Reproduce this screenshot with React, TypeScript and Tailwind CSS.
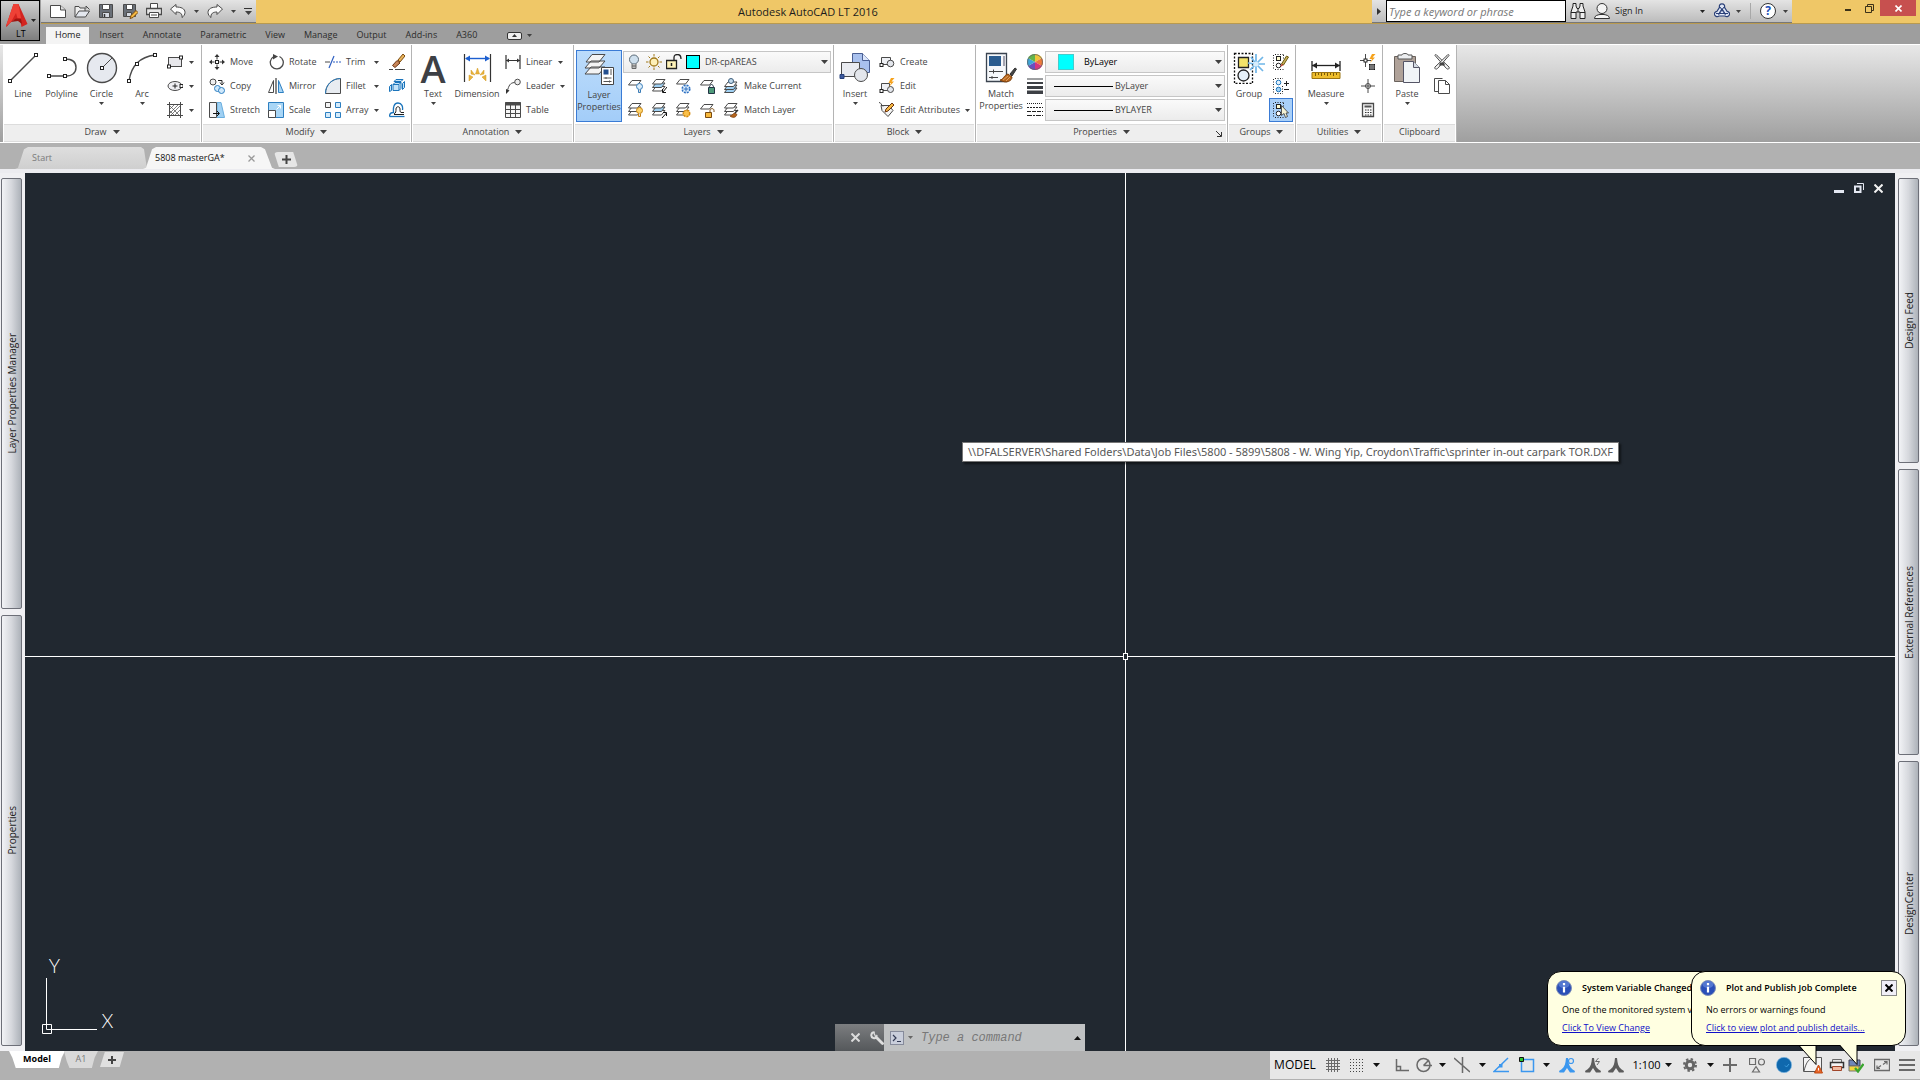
import React from 'react';
import { clsx } from 'clsx';

const INK = '#4a4a4a';

interface IconProps {
  size?: number;
  box?: string;
  children: React.ReactNode;
}

// every ribbon drawing goes through here: 16 unit box for small, 32 for large
const Icon: React.FC<IconProps> = ({ size = 16, box, children }) => (
  <svg
    width={size}
    height={size}
    viewBox={box || `0 0 ${size} ${size}`}
    fill="none"
    stroke={INK}
    strokeWidth="1"
    className="shrink-0"
    aria-hidden="true"
  >
    {children}
  </svg>
);

const Caret: React.FC<{ wide?: boolean; className?: string }> = ({ wide, className }) => (
  <svg
    width={wide ? 7 : 5}
    height={wide ? 4 : 3}
    viewBox="0 0 8 4"
    preserveAspectRatio="none"
    className={clsx('shrink-0', className || 'text-[#404040]')}
    aria-hidden="true"
  >
    <path d="M0 0h8L4 4z" fill="currentColor" />
  </svg>
);

/* ---------- small shared drawings ---------- */

const Sheet: React.FC<{ y: number; fill?: string; stroke?: string }> = ({ y, fill = '#fff', stroke = INK }) => (
  <path d={`M1.5 ${y + 4.5}L5 ${y}h9l-3.500 4.500z`} fill={fill} stroke={stroke} />
);

const Sheets: React.FC<{ accent?: string }> = ({ accent = '#fff' }) => (
  <>
    <Sheet y={8.5} />
    <Sheet y={5} fill={accent} />
    <Sheet y={1.5} />
  </>
);

const Bulb: React.FC<{ fill: string; stroke: string }> = ({ fill, stroke }) => (
  <g stroke={stroke}>
    <circle cx="12.5" cy="8.500" r="3" fill={fill} />
    <path d="M11.500 11.500v3h2v-3" fill="#ddd" />
  </g>
);

const NodeBox: React.FC<{ x: number; y: number }> = ({ x, y }) => (
  <rect x={x - 1.5} y={y - 1.5} width="3" height="3" fill="#fff" stroke="#222" />
);

const Brush = () => (
  <g strokeWidth="1">
    <path d="M25 22l5-6 1.500 1-4.500 7z" fill="#444" stroke="#333" />
    <path d="M15 28c3 0 4-5 8-6l4 3c0 4-6 7-12 3z" fill="#b5651d" stroke="#7a3e0c" />
    <path d="M18 28l5-4M21 29l4-4" stroke="#e0a060" />
  </g>
);

const Bolt = () => <path d="M12 0l-2.500 5h2.500l-2 4 5-5.500h-2.500L15.500 0z" fill="#f6a21b" stroke="none" />;

const GroupDots = () => (
  <>
    <path d="M.5 1v15M2 .5h9" stroke="#222" strokeDasharray="1 1.500" />
    <rect x="3.500" y="2.500" width="4" height="4" fill="#fffbd0" stroke="#222" />
    <circle cx="5.500" cy="11.500" r="2.300" fill="#fff" stroke="#222" />
    <path d="M2 15.500h9M10.500 1v5" stroke="#222" strokeDasharray="1 1.500" />
  </>
);

/* ---------- icon set ---------- */

const icons = {
  fileNew: (
    <Icon>
      <path d="M.5 2.500h10l5 4.500v7.500H.5z" fill="#fff" />
      <path d="M10.500 2.500V7h5" fill="#ddd" />
    </Icon>
  ),
  open: (
    <Icon>
      <path d="M1 14V3.500h4l1 1.500h5v3" fill="#eee" />
      <path d="M1 14l4-6h10.500l-4 6z" fill="#e3e7ee" />
      <path d="M12 5.500V3l3.500 3.500" />
    </Icon>
  ),
  save: (
    <Icon>
      <path d="M1.500 1.500h13v13h-13z" fill="#6a7078" />
      <path d="M4.500 1.500h7v5h-7z" fill="#fff" />
      <path d="M4.500 9.500h7v5h-7z" fill="#d5dae2" />
      <path d="M6.500 11v3" stroke="#333" strokeWidth="1.500" />
    </Icon>
  ),
  saveAs: (
    <Icon>
      <path d="M1.500 1.500h12v12h-12z" fill="#6a7078" />
      <path d="M4.500 1.500h6v5h-6z" fill="#fff" />
      <path d="M4.500 9.500h5v4h-5z" fill="#d5dae2" />
      <path d="M8 15.500l1-3 5-5 2 2-5 5z" fill="#f5b942" stroke="#7a4a10" />
    </Icon>
  ),
  print: (
    <Icon>
      <path d="M4.500 5V.5h7V5" fill="#fff" />
      <path d="M.5 5.500h15v6H.5z" fill="#e8e8e8" strokeWidth="1.300" />
      <path d="M3.500 9.500h9v5h-9z" fill="#fff" />
      <path d="M5 12h6" />
    </Icon>
  ),
  undo: (
    <Icon>
      <path d="M.5 6L6 1.500V4c5 0 9 1.500 9 5.500 0 2-1.500 4-3 5 .5-4-2-5.500-6-5.500v2.500z" fill="#fafafa" />
    </Icon>
  ),
  redo: (
    <Icon>
      <path d="M15.500 6L10 1.500V4C5 4 1 5.500 1 9.500c0 2 1.500 4 3 5-.5-4 2-5.500 6-5.500v2.500z" fill="#fafafa" />
    </Icon>
  ),
  line: (
    <Icon size={32}>
      <path d="M3 29L29 3" strokeWidth="1.400" />
      <NodeBox x={3} y={29} />
      <NodeBox x={29} y={3} />
    </Icon>
  ),
  polyline: (
    <Icon size={32}>
      <path d="M3 24h18c4 0 9-2.500 9-8.500S25 7 19 7" strokeWidth="1.400" />
      <NodeBox x={3} y={24} />
      <NodeBox x={19} y={24} />
      <NodeBox x={19} y={7} />
    </Icon>
  ),
  circle: (
    <Icon size={32}>
      <circle cx="16" cy="16" r="14.500" fill="#e6e9ef" strokeWidth="1.400" />
      <path d="M16 16L26 6" />
      <NodeBox x={16} y={16} />
    </Icon>
  ),
  arc: (
    <Icon size={32}>
      <path d="M3 29C5 15 13 5 29 3" strokeWidth="1.400" />
      <NodeBox x={3} y={29} />
      <NodeBox x={11} y={12} />
      <NodeBox x={29} y={3} />
    </Icon>
  ),
  rect: (
    <Icon>
      <rect x="1.500" y="3.500" width="13" height="9" fill="#e8e8ec" />
      <NodeBox x={2} y={12.5} />
      <NodeBox x={14} y={3.5} />
    </Icon>
  ),
  ellipse: (
    <Icon>
      <ellipse cx="8" cy="8" rx="7" ry="4.500" fill="#f0f0f4" />
      <path d="M8 5.500v5M5.500 8h5" stroke="#222" />
      <NodeBox x={14.5} y={8} />
    </Icon>
  ),
  hatch: (
    <Icon>
      <path d="M2.500 0v16M13.500 0v16M0 2.500h16M0 13.500h16" />
      <path d="M3 7l4-4M3 11l8-8M4 13l9-9M8 13l5-5M3 4l9 9M3 9l4 4" strokeWidth=".7" />
    </Icon>
  ),
  move: (
    <Icon>
      <path d="M8 0l2.500 3h-5zM8 16l2.500-3h-5zM0 8l3-2.500v5zM16 8l-3-2.500v5z" fill="#333" stroke="none" />
      <path d="M8 3v2.500M8 10.500V13M3 8h2.500M10.500 8H13" stroke="#333" />
      <NodeBox x={8} y={8} />
    </Icon>
  ),
  copy: (
    <Icon>
      <circle cx="4" cy="4" r="3" fill="#eee" />
      <circle cx="8.500" cy="10.500" r="3" fill="#cfe8fb" stroke="#2d7fc1" />
      <circle cx="12.500" cy="12.500" r="3" fill="#cfe8fb" stroke="#2d7fc1" />
      <path d="M9 2.500h4v3M11 4.500l2 2.500 2-2.500" stroke="#222" />
    </Icon>
  ),
  stretch: (
    <Icon>
      <path d="M8 .5h4l3.500 15H8z" fill="#9fd0f3" stroke="#6aaede" />
      <path d="M.5.5h7v15h-7z" fill="#f4f4f6" />
      <path d="M4 11.500h6M8 9l2.500 2.500L8 14" stroke="#111" />
    </Icon>
  ),
  rotate: (
    <Icon>
      <path d="M11.500 2.500a6.500 6.500 0 1 1-6 .3" strokeWidth="1.300" />
      <path d="M5 0l5 2.500L5 5.500z" fill="#444" stroke="none" />
    </Icon>
  ),
  mirror: (
    <Icon>
      <path d="M5.500 2.500v12h-5z" fill="#fff" />
      <path d="M8 0v16" strokeWidth="1.300" />
      <path d="M10.500 2.500v12h5z" fill="#a9d6f6" stroke="#2d7fc1" />
    </Icon>
  ),
  scale: (
    <Icon>
      <path d="M.5.5h15v15H.5z" fill="#a9d6f6" stroke="#2d7fc1" />
      <path d="M.5 8.500h7v7h-7z" fill="#fff" />
      <path d="M8.500 7.500l4-4M9.500 3.500h3v3" stroke="#fff" />
    </Icon>
  ),
  trim: (
    <Icon>
      <path d="M0 8h5" />
      <path d="M4 14l5-12" stroke="#2d5fc1" strokeWidth="1.200" />
      <path d="M8 8h8" stroke="#2d5fc1" strokeDasharray="2 1" />
    </Icon>
  ),
  fillet: (
    <Icon>
      <path d="M.5 15.500C.5 7 7 .5 15.500.5v15z" fill="#e8ecf1" />
      <path d="M.5 15.500C.5 7 7 .5 15.500.5" stroke="#2d7fc1" />
    </Icon>
  ),
  array: (
    <Icon>
      <path d="M.5.5h5v5h-5z" fill="#f4f4f4" />
      <path d="M10.500.5h5v5h-5zM.5 10.500h5v5h-5zM10.500 10.500h5v5h-5z" fill="#d4ebfb" stroke="#2d7fc1" />
    </Icon>
  ),
  erase: (
    <Icon>
      <path d="M9 6l5-6 2 2-5 6z" fill="#e8b45c" stroke="#7a4a10" />
      <path d="M3.500 11.500L8 6.500l3 2.500-5 4.500z" fill="#c9875a" stroke="#6b3413" />
      <path d="M0 15.500h4M6 15.500h10" stroke="#444" />
    </Icon>
  ),
  explode: (
    <Icon>
      <g fill="#c4e3f9" stroke="#1b74bb">
        <path d="M4 6.500h6v6H4zM4 6.500l2-2h6l-2 2M10 12.500l2-2v-6" />
        <path d="M.5 8.500l2-2v6l-2 1zM13.500 5.500l2-2v6l-2 2zM5 3.500l2-2h7l-2 2z" />
      </g>
    </Icon>
  ),
  offset: (
    <Icon>
      <path d="M.5 14.500c0-3 1-4 4-4C4 5 5 1 9 1s5 4 4.500 7" stroke="#1b74bb" strokeWidth="1.300" />
      <path d="M.5 14.500h15" stroke="#1b74bb" strokeWidth="1.300" />
      <path d="M5 12c2-1 2-3 2-5 0-3 4-3 4 0 0 2 0 3 1 3.500h3M5 12.500h10" stroke="#222" />
    </Icon>
  ),
  text: (
    <span className="h-8 w-8 text-center font-['Open_Sans',sans-serif] text-[38px] leading-[32px] font-semibold text-[#3d4045]">
      A
    </span>
  ),
  dimension: (
    <Icon size={32}>
      <path d="M3.500 2v28M29.500 2v28" stroke="#333" strokeWidth="1.200" />
      <path d="M5 6.500h23" stroke="#1d5fd0" strokeWidth="1.400" />
      <path d="M4 6.500l5-3v6zM29 6.500l-5-3v6z" fill="#1d5fd0" stroke="none" />
      <g fill="#e9b33e" stroke="#d39a22" strokeWidth=".5">
        <path d="M16.500 16l2 6h-4zM10 18l4 5-4-1zM23 18l-4 5 4-1zM8 23l4 2-4 4zM25 23l-4 2 4 4z" />
      </g>
    </Icon>
  ),
  linear: (
    <Icon>
      <path d="M1 1v14M15 1v14M1 6.500h14" stroke="#333" strokeWidth="1.200" />
      <path d="M1 6.500l3-2v4zM15 6.500l-3-2v4z" fill="#333" stroke="none" />
    </Icon>
  ),
  leader: (
    <Icon>
      <circle cx="12.500" cy="4" r="2.800" fill="#eee" />
      <path d="M9.500 4.500C5 5 4 7 2 14" />
      <path d="M1 16l0-5 3.500 1.500z" fill="#333" stroke="none" />
    </Icon>
  ),
  table: (
    <Icon>
      <path d="M.5.500h15v15H.500z" fill="#f6f6f6" />
      <path d="M0 .5h16v3H0z" fill="#4a4a4a" stroke="none" />
      <path d="M.5 7.500h15M.5 11.500h15M5.500 3v13M10.500 3v13" />
    </Icon>
  ),
  layerProps: (
    <Icon size={32}>
      <path d="M2 21l6-7h14l-6 7zM2 15l6-7h14l-6 7zM3 9l6-7.500h13L16 9z" fill="#f4f4f4" />
      <path d="M18.500 14.500h12v17h-12z" fill="#fff" stroke="#444" />
      <path d="M20.500 16.500h5v5h-5z" fill="#234f8f" stroke="none" />
      <path d="M28 16v6M20.500 25h8M20.500 28.500h8M23 24v2M26.500 27.500v2" stroke="#555" />
    </Icon>
  ),
  bulb: (
    <Icon>
      <circle cx="8" cy="5.500" r="4.500" fill="#cfe0ee" stroke="#5b6b78" />
      <path d="M6 10v4.500h4V10" fill="#bbb" stroke="#666" />
      <path d="M6 12h4" stroke="#666" />
    </Icon>
  ),
  sun: (
    <Icon>
      <circle cx="8" cy="8" r="4" fill="#fdf0b8" stroke="#a07818" strokeWidth="1.300" />
      <path d="M8 0v2.500M8 13.500V16M0 8h2.500M13.500 8H16M2.500 2.500L4 4M12 12l1.500 1.500M2.500 13.500L4 12M12 4l1.500-1.500" stroke="#a07818" />
    </Icon>
  ),
  unlock: (
    <Icon>
      <path d="M.5 6.500h10v8H.5z" fill="#fff3b8" stroke="#222" strokeWidth="1.300" />
      <path d="M8 6V3.500C8 1 10 .5 11.500.5S15 1.500 15 5" stroke="#222" strokeWidth="1.300" />
      <path d="M5.500 9v3" stroke="#222" strokeWidth="1.500" />
    </Icon>
  ),
  layOff: (
    <Icon>
      <Sheet y={2.5} />
      <Bulb fill="#dceefb" stroke="#3a7db8" />
    </Icon>
  ),
  layIso: (
    <Icon>
      <Sheets accent="#9fd0f3" />
      <path d="M16 9l-4 5M11.500 11v3.500H15" stroke="#111" />
    </Icon>
  ),
  layFreeze: (
    <Icon>
      <Sheet y={1.5} />
      <circle cx="11" cy="11" r="3.800" fill="#e3f2fd" stroke="#2d6fc1" strokeWidth="1.500" strokeDasharray="2 1" />
      <path d="M11 8.500v5M8.500 11h5" stroke="#2d6fc1" />
    </Icon>
  ),
  layLock: (
    <Icon>
      <Sheet y={2.5} />
      <path d="M9.500 9.500h6v6h-6z" fill="#4f9a7a" stroke="#234" />
      <path d="M10.500 9.500c0-4 4-4 4 0" stroke="#234" />
    </Icon>
  ),
  makeCurrent: (
    <Icon>
      <Sheet y={10} fill="#9fd0f3" />
      <Sheet y={7} fill="#9fd0f3" />
      <Sheet y={4} />
      <circle cx="8" cy="3" r="2.500" fill="#c4dcee" stroke="#3b5c7a" />
    </Icon>
  ),
  layOn: (
    <Icon>
      <Sheets />
      <Bulb fill="#fdd36a" stroke="#c78212" />
    </Icon>
  ),
  layUniso: (
    <Icon>
      <Sheets accent="#9fd0f3" />
      <path d="M11 16l4.500-5M12 10.500h3.500V14" stroke="#111" />
    </Icon>
  ),
  layThaw: (
    <Icon>
      <Sheets />
      <circle cx="11.500" cy="11.500" r="3.200" fill="#fbc14a" stroke="#d48a10" strokeWidth="1.500" strokeDasharray="2 1" />
    </Icon>
  ),
  layUnlock: (
    <Icon>
      <Sheet y={2.5} />
      <path d="M6.500 10.500h6v5h-6z" fill="#f8b93c" stroke="#7a4a10" />
      <path d="M11 10V8.500c0-2.500 4-2.500 4 0V10" stroke="#7a4a10" />
    </Icon>
  ),
  matchLayer: (
    <Icon>
      <Sheets />
      <path d="M7 14c2 0 3-3 5-3l2 1.500c-1 3-4 4-7 1.500z" fill="#b5651d" stroke="#7a3e0c" strokeWidth=".7" />
      <path d="M12 11l3-3" stroke="#333" strokeWidth="1.500" />
    </Icon>
  ),
  insert: (
    <Icon size={32}>
      <path d="M13.500 1.500h10l7 7v12h-17z" fill="#a9c1ee" stroke="#4a5f93" />
      <path d="M23.500 1.500v7h7" fill="#dde7fb" stroke="#4a5f93" />
      <path d="M2.500 10.500h18v14h-18z" fill="#e9ebf0" />
      <circle cx="22" cy="23" r="6.500" fill="#e3e6ec" />
      <path d="M1 22.500h4v4H1z" fill="#3d5a9e" stroke="#26407c" />
    </Icon>
  ),
  create: (
    <Icon>
      <path d="M2.500 3.500h9v7h-9z" fill="#eef0f4" />
      <circle cx="11.500" cy="9.500" r="3.300" fill="#e3e6ec" />
      <NodeBox x={2.5} y={11} />
    </Icon>
  ),
  edit: (
    <Icon>
      <path d="M2.500 5.500h8v7h-8z" fill="#eef0f4" />
      <circle cx="11.500" cy="11.500" r="3" fill="#e3e6ec" />
      <NodeBox x={2.5} y={13} />
      <Bolt />
    </Icon>
  ),
  editAttr: (
    <Icon>
      <path d="M2 3.500h8l4 5-5 6-6-6z" fill="#f4f4f4" />
      <path d="M0 .5c2 0 2 2 4 4" />
      <path d="M6 10l1-3 6-6 2 2-6 6z" fill="#f5b942" stroke="#6b3413" />
    </Icon>
  ),
  matchProps: (
    <Icon size={32}>
      <path d="M1.500 1.500h20v28h-20z" fill="#f6f8fb" stroke="#3b4450" strokeWidth="1.300" />
      <path d="M4 4h12v10H4z" fill="#2b5c8f" stroke="none" />
      <path d="M19 4v10" stroke="#889" strokeWidth="1.500" />
      <path d="M4 19.500h14M4 25.500h9M8.500 17.500v4M7 24v3" stroke="#444" />
      <Brush />
    </Icon>
  ),
  colorWheel: (
    <Icon>
      <g stroke="none">
        <path d="M8 8L8 0A8 8 0 0 1 15 4z" fill="#f0c43c" />
        <path d="M8 8L15 4A8 8 0 0 1 15 12z" fill="#ef7b3a" />
        <path d="M8 8L15 12A8 8 0 0 1 8 16z" fill="#d8367c" />
        <path d="M8 8L8 16A8 8 0 0 1 1 12z" fill="#6a4fc0" />
        <path d="M8 8L1 12A8 8 0 0 1 1 4z" fill="#3fa6d8" />
        <path d="M8 8L1 4A8 8 0 0 1 8 0z" fill="#63b54a" />
      </g>
      <circle cx="8" cy="8" r="7.500" stroke="#666" strokeWidth=".8" />
    </Icon>
  ),
  lineweight: (
    <Icon>
      <path d="M0 1h16" stroke="#3d4045" />
      <path d="M0 5h16" stroke="#3d4045" strokeWidth="2" />
      <path d="M0 9.500h16" stroke="#3d4045" strokeWidth="3" />
      <path d="M0 14.500h16" stroke="#3d4045" strokeWidth="4" />
    </Icon>
  ),
  linetype: (
    <Icon>
      <path d="M0 1.500h16" stroke="#222" strokeDasharray="1 1" />
      <path d="M0 5.500h16" stroke="#222" strokeDasharray="2 1" />
      <path d="M0 9.500h16" stroke="#222" strokeDasharray="4 1" />
      <path d="M0 13.500h16" stroke="#222" strokeDasharray="5 1 2 1" />
    </Icon>
  ),
  group: (
    <Icon size={32}>
      <path d="M1.500 1.500h18v30h-18z" stroke="#111" strokeDasharray="2 1.500" strokeWidth="1.300" />
      <path d="M5.500 5.500h10v10h-10z" fill="#f3e36a" stroke="#222" strokeWidth="1.300" />
      <circle cx="10.500" cy="23.500" r="5.500" fill="#e6f0f8" stroke="#222" strokeWidth="1.300" />
      <path d="M23 12V2M23 12l7-7M23 12h9M23 12l7 7M23 12v9M23 12l-6 6M23 12l-8-1M23 12l-5-7" stroke="#6fb6e8" strokeWidth="1.700" />
      <circle cx="23" cy="12" r="2.500" fill="#d8eefc" stroke="none" />
    </Icon>
  ),
  ungroup: (
    <Icon>
      <GroupDots />
      <path d="M8.500 10l5-8 2 1-5 8z" fill="#c9b35a" stroke="#6b5a13" />
      <path d="M7.500 13l1-3 2 1z" fill="#c0392b" stroke="none" />
    </Icon>
  ),
  groupEdit: (
    <Icon>
      <g stroke="#1b74bb">
        <path d="M.5 1v15" stroke="#222" strokeDasharray="1 1.500" />
        <circle cx="5.500" cy="4.500" r="2.300" fill="#e3f2fd" />
        <circle cx="5.500" cy="11.500" r="2.300" fill="#9fd0f3" />
      </g>
      <path d="M2 .5h8M2 15.500h8M9.500 8v7" stroke="#222" strokeDasharray="1 1.500" />
      <path d="M11 5.500h5M13.500 3v5M11 11.500h5" stroke="#222" />
    </Icon>
  ),
  groupSelect: (
    <Icon>
      <GroupDots />
      <path d="M8.500 3.500v10l2.500-2 1.500 4 2-1-1.500-3.500h2.500z" fill="#f4f3d5" stroke="#333" strokeWidth=".8" />
    </Icon>
  ),
  measure: (
    <Icon size={32}>
      <path d="M2 9v10M30 9v10" stroke="#222" strokeWidth="1.300" />
      <path d="M2 13.500h28" stroke="#222" strokeWidth="1.300" />
      <path d="M2 13.500l5-3v6zM30 13.500l-5-3v6z" fill="#222" stroke="none" />
      <path d="M2 20.500h28v6H2z" fill="#eebd2c" stroke="#9c7410" />
      <path d="M5.500 21v3M8.500 21v2M11.500 21v3M14.500 21v2M17.500 21v3M20.500 21v2M23.500 21v3M26.500 21v2" stroke="#7a5a08" />
    </Icon>
  ),
  quickSelect: (
    <Icon>
      <path d="M5.500 0v13M0 6.500h11" />
      <NodeBox x={5.5} y={6.5} />
      <Bolt />
      <path d="M9 10h6v6H9z" fill="#111" stroke="none" />
      <path d="M11 10v6M13 10v6M9 12h6M9 14h6" stroke="#fff" strokeWidth=".5" />
    </Icon>
  ),
  pointId: (
    <Icon>
      <path d="M8 1v14M1 8h14" />
      <circle cx="8" cy="8" r="2.500" />
    </Icon>
  ),
  calc: (
    <Icon>
      <path d="M2.500 1.500h11v13h-11z" fill="#f8f8f8" strokeWidth="1.300" />
      <path d="M4.500 3.500h7v2h-7z" fill="#555" stroke="none" />
      <path d="M5 8h7M5 10.500h7M5 13h7" stroke="#333" strokeDasharray="1.500 1" />
    </Icon>
  ),
  paste: (
    <Icon size={32}>
      <path d="M3.500 4.500h21v25h-21z" fill="#b0a299" stroke="#6a625c" />
      <path d="M7 3h4c0-2 6-2 6 0h4v4H7z" fill="#eceef0" stroke="#555" />
      <path d="M12.500 9.500h10l6 6v15h-16z" fill="#f1f4f7" stroke="#556" />
      <path d="M22.500 9.500v6h6" fill="#d5dbe2" stroke="#556" />
    </Icon>
  ),
  // open blades crossing at the pivot, handles as crossed outlines
  cut: (
    <Icon>
      <path d="M1 1.500c0-1.500 1.500-1 2 0L15 13c1 1.500-1 3-2.500 1.500L8 9.500z" fill="#f4f4f4" />
      <path d="M15 1.500c0-1.500-1.500-1-2 0L1 13c-1 1.500 1 3 2.500 1.500L8 9.500z" fill="#f4f4f4" />
      <path d="M6 8.500h4l1 3H5z" fill="#444" stroke="none" />
    </Icon>
  ),
  copyClip: (
    <Icon>
      <path d="M4 13.500H.5v-13h8" />
      <path d="M4.500 2.500h7l4 4v9h-11z" fill="#fff" />
      <path d="M11.500 2.500v4h4" />
    </Icon>
  ),
  binoculars: (
    <Icon>
      <path d="M1 15.500V9l2-6V.5h3V3l1 2.500h2L10 3V.5h3V3l2 6v6.500h-5V9H6v6.500z" fill="#eee" stroke="#222" />
      <path d="M1 9.500h5M10 9.500h5M8 5v4" stroke="#222" />
    </Icon>
  ),
  user: (
    <Icon>
      <path d="M.5 15.500c0-3 3-3.500 5.500-4h4c2.500.5 5.500 1 5.500 4z" fill="#f4f4f4" stroke="#333" />
      <circle cx="8" cy="5.500" r="5" fill="#f4f4f4" stroke="#333" />
    </Icon>
  ),
  exchange: (
    <Icon>
      <path
        d="M8 .8c2 0 3 1.500 2.500 3.500l2.500 4c2 .3 3 2 2.300 3.700-.8 1.800-2.800 2.200-4.300 1H5c-1.500 1.200-3.500.8-4.300-1C0 10.300 1 8.600 3 8.300l2.500-4C5 2.300 6 .8 8 .8z"
        fill="#dfe6f5"
        stroke="#2a4078"
        strokeWidth="1.200"
      />
      <path d="M8 5.500l3 5H5zM6 4l5.500 8M10 4L4.500 12M2 10.500h12" stroke="#2a4078" />
    </Icon>
  ),
  help: (
    <span className="flex h-4 w-4 items-center justify-center rounded-full border border-[#333] bg-white text-[12px] leading-none font-bold text-[#1d4fb8]">
      ?
    </span>
  ),
};

/* ---------- ribbon building blocks ---------- */

interface ToolProps {
  icon: React.ReactNode;
  label?: string;
  title?: string;
  caret?: boolean;
  className?: string;
}

const Tool: React.FC<ToolProps> = ({ icon, label, title, caret, className }) => (
  <button type="button" aria-label={title || label} className={clsx('flex h-6 items-center gap-[5px] text-left', className)}>
    {icon}
    {label && <span className="whitespace-nowrap">{label}</span>}
    {caret && <Caret className="ml-auto text-[#404040]" />}
  </button>
);

const BigTool: React.FC<ToolProps> = ({ icon, label, caret, className }) => (
  <button type="button" className={clsx('flex h-[72px] shrink-0 flex-col items-center pt-[2px] leading-3', className)}>
    {icon}
    <span className="mt-1 w-min whitespace-pre-wrap">{label}</span>
    {caret && <Caret className="mt-[2px] text-[#404040]" />}
  </button>
);

interface PanelProps {
  title: string;
  caret?: boolean;
  corner?: boolean;
  className: string;
  children: React.ReactNode;
}

const Panel: React.FC<PanelProps> = ({ title, caret = true, corner, className, children }) => (
  <section className={clsx('flex shrink-0 flex-col border-r border-[#b4b4b4] bg-white', className)}>
    <div className="flex flex-1 items-start pt-[5px]">{children}</div>
    <button
      type="button"
      className="relative mx-px flex h-[18px] items-center justify-center gap-[6px] border-y border-[#dcdcdc] bg-[#eeeeee] pb-[2px]"
    >
      {title}
      {caret && <Caret wide />}
      {corner && (
        <svg width="6" height="6" viewBox="0 0 6 6" className="absolute right-1 bottom-1" aria-hidden="true">
          <path d="M0 0l5 5M5.500 1v4.500H1" stroke="#333" fill="none" />
        </svg>
      )}
    </button>
  </section>
);

interface ComboProps {
  label: string;
  value: string;
  lead: React.ReactNode;
  className?: string;
}

const Combo: React.FC<ComboProps> = ({ label, value, lead, className }) => (
  <div
    className={clsx(
      'flex h-[22px] items-center border border-[#c6c6c6] bg-linear-to-b from-[#fafafa] to-[#ececec] pr-[2px]',
      className
    )}
  >
    {lead}
    <select aria-label={label} className="min-w-0 flex-1 appearance-none bg-transparent outline-none">
      <option>{value}</option>
    </select>
    <Caret wide />
  </div>
);

const LineSample = () => <span className="mr-[2px] ml-2 h-px w-[59px] bg-black" />;

const RIBBON_TABS = ['Home', 'Insert', 'Annotate', 'Parametric', 'View', 'Manage', 'Output', 'Add-ins', 'A360'];

const TitleBar = () => (
  <div className="flex h-6 border-b border-[#b99a4f] bg-[#efc767]">
    <div className="flex w-[215px] items-center border-b border-[#777] bg-linear-to-b from-[#e4e4e4] to-[#bcbcbc] pl-[9px]">
      <div className="flex gap-2">
        <button type="button" aria-label="New">{icons.fileNew}</button>
        <button type="button" aria-label="Open">{icons.open}</button>
        <button type="button" aria-label="Save">{icons.save}</button>
        <button type="button" aria-label="Save As">{icons.saveAs}</button>
        <button type="button" aria-label="Plot">{icons.print}</button>
        <button type="button" aria-label="Undo" className="flex items-center gap-2">{icons.undo}<Caret /></button>
        <button type="button" aria-label="Redo" className="flex items-center gap-2">{icons.redo}<Caret /></button>
        <button type="button" aria-label="Customize" className="flex flex-col items-center justify-center gap-[2px]">
          <span className="h-px w-2 bg-[#333]" />
          <Caret wide />
        </button>
      </div>
    </div>
    <h1 className="flex-1 self-center pr-3 text-center text-[11px] text-[#1c1c1c]">Autodesk AutoCAD LT 2016</h1>
    <div className="flex w-[420px] items-center border-b border-[#777] bg-linear-to-b from-[#e4e4e4] to-[#bcbcbc]">
      <button type="button" aria-label="Collapse search" className="flex w-[14px] justify-center">
        <svg width="4" height="7" viewBox="0 0 4 7" aria-hidden="true"><path d="M0 0l4 3.500L0 7z" fill="#333" /></svg>
      </button>
      <input
        type="text"
        aria-label="Search"
        placeholder="Type a keyword or phrase"
        className="h-[22px] w-[180px] border border-black bg-white px-[2px] text-[11px] italic placeholder:text-[#777]"
      />
      <button type="button" aria-label="Search" className="ml-1">{icons.binoculars}</button>
      <button type="button" className="ml-2 flex w-[111px] items-center gap-[5px]">
        {icons.user}
        Sign In
        <Caret className="ml-auto" />
      </button>
      <button type="button" aria-label="Autodesk Exchange" className="ml-[9px] flex items-center gap-[6px]">{icons.exchange}<Caret /></button>
      <span className="ml-[9px] h-4 w-px bg-[#a8a8a8]" />
      <button type="button" aria-label="Help" className="ml-[9px] flex items-center gap-[7px]">{icons.help}<Caret /></button>
    </div>
    <div className="flex w-32 items-start justify-end pr-1">
      <button type="button" aria-label="Minimize" className="flex h-4 w-5 items-center justify-center">
        <span className="mt-1 h-[2px] w-[6px] bg-[#3b3118]" />
      </button>
      <button type="button" aria-label="Restore" className="flex h-4 w-[22px] items-center justify-center">
        <svg width="9" height="9" viewBox="0 0 9 9" fill="none" stroke="#3b3118" aria-hidden="true">
          <path d="M2.500 2V.5h6v6H7M.5 2.500h6v6h-6z" />
        </svg>
      </button>
      <button type="button" aria-label="Close" className="flex h-4 w-9 items-center justify-center bg-[#c7504f]">
        <svg width="7" height="7" viewBox="0 0 7 7" stroke="#fff" strokeWidth="1.600" aria-hidden="true">
          <path d="M.5.5l6 6M6.500.5l-6 6" />
        </svg>
      </button>
    </div>
  </div>
);

const Header = () => (
  <header className="flex bg-[#9e9e9e]">
    <button
      type="button"
      aria-label="Application menu"
      className="relative mr-px h-[41px] w-10 border border-black bg-linear-to-b from-[#cfcfcf] to-[#7e7e7e]"
    >
      <svg width="24" height="26" viewBox="0 0 24 26" className="absolute top-[2px] left-1" aria-hidden="true">
        <path d="M8.500 1h5l9 20-6 3-1-5-3-2H9l-4 3-3.500 4L1 23z" fill="#d3241f" />
        <path d="M8.500 1L1 23l5-4 5-9 1.500 5H16L13.500 1z" fill="#ee4136" />
        <path d="M6 19l5-3.500 5 .5 1 5-4-3z" fill="#9c1511" />
      </svg>
      <Caret className="absolute top-[18px] right-[3px] text-[#222]" />
      <span className="absolute bottom-0 left-[15px] text-black">LT</span>
    </button>
    <div className="min-w-0 flex-1">
      <TitleBar />
      <nav className="flex h-5 items-end gap-px pl-[5px]">
        {RIBBON_TABS.map((tab, i) => (
          <button
            key={tab}
            type="button"
            className={clsx('h-[17px] px-[9px] pb-[2px]', i === 0 ? 'bg-[#f4f4f4] text-[#222]' : 'text-[#2c2c2c]')}
          >
            {tab}
          </button>
        ))}
        <button type="button" aria-label="Minimize ribbon" className="ml-5 flex h-[17px] items-center gap-[5px]">
          <span className="flex h-2 w-[15px] items-center justify-center rounded-[2px] border border-[#333] bg-[#eee]">
            <Caret className="rotate-180 text-[#333]" />
          </span>
          <Caret />
        </button>
      </nav>
    </div>
  </header>
);

const Ribbon = () => (
  <div className="flex h-[99px] border-y border-white bg-linear-to-b from-[#e8e8e8] to-[#9f9f9f] pl-[3px] text-[#444]">
    <Panel title="Draw" className="w-[199px]">
      <BigTool icon={icons.line} label="Line" className="ml-px w-[38px]" />
      <BigTool icon={icons.polyline} label="Polyline" className="w-[39px]" />
      <BigTool icon={icons.circle} label="Circle" caret className="w-[41px]" />
      <BigTool icon={icons.arc} label="Arc" caret className="w-10" />
      <div className="ml-[5px] w-[27px]">
        <Tool icon={icons.rect} title="Rectangle" caret className="w-full" />
        <Tool icon={icons.ellipse} title="Ellipse" caret className="w-full" />
        <Tool icon={icons.hatch} title="Hatch" caret className="w-full" />
      </div>
    </Panel>

    <Panel title="Modify" className="w-[210px]">
      <div className="ml-[7px] w-[59px]">
        <Tool icon={icons.move} label="Move" />
        <Tool icon={icons.copy} label="Copy" />
        <Tool icon={icons.stretch} label="Stretch" />
      </div>
      <div className="w-[57px]">
        <Tool icon={icons.rotate} label="Rotate" />
        <Tool icon={icons.mirror} label="Mirror" />
        <Tool icon={icons.scale} label="Scale" />
      </div>
      <div className="w-[54px]">
        <Tool icon={icons.trim} label="Trim" caret className="w-full" />
        <Tool icon={icons.fillet} label="Fillet" caret className="w-full" />
        <Tool icon={icons.array} label="Array" caret className="w-full" />
      </div>
      <div className="ml-[10px]">
        <Tool icon={icons.erase} title="Erase" />
        <Tool icon={icons.explode} title="Explode" />
        <Tool icon={icons.offset} title="Offset" />
      </div>
    </Panel>

    <Panel title="Annotation" className="w-[162px]">
      <BigTool icon={icons.text} label="Text" caret className="ml-[3px] w-9" />
      <BigTool icon={icons.dimension} label="Dimension" className="w-[52px]" />
      <div className="ml-[2px] w-[60px]">
        <Tool icon={icons.linear} label="Linear" caret className="w-[58px]" />
        <Tool icon={icons.leader} label="Leader" caret className="w-full" />
        <Tool icon={icons.table} label="Table" />
      </div>
    </Panel>

    <Panel title="Layers" className="w-[260px]">
      <BigTool
        icon={icons.layerProps}
        label="Layer Properties"
        className="ml-[2px] w-[46px] border border-[#3a7bd5] bg-linear-to-b from-[#bcdcfb] to-[#a3cdf8]"
      />
      <div>
        <div className="flex h-6 items-center">
          <Combo
            label="Layer"
            value="DR-cpAREAS"
            className="ml-px w-[208px]"
            lead={
              <div className="mr-[5px] ml-[2px] flex items-center gap-[4px]">
                {icons.bulb}
                {icons.sun}
                {icons.unlock}
                <span className="h-[14px] w-[14px] border border-black bg-[#00ffff]" />
              </div>
            }
          />
        </div>
        <div className="ml-[5px] flex gap-2">
          <Tool icon={icons.layOff} title="Off" />
          <Tool icon={icons.layIso} title="Isolate" />
          <Tool icon={icons.layFreeze} title="Freeze" />
          <Tool icon={icons.layLock} title="Lock" />
          <Tool icon={icons.makeCurrent} label="Make Current" />
        </div>
        <div className="ml-[5px] flex gap-2">
          <Tool icon={icons.layOn} title="Turn All Layers On" />
          <Tool icon={icons.layUniso} title="Unisolate" />
          <Tool icon={icons.layThaw} title="Thaw All Layers" />
          <Tool icon={icons.layUnlock} title="Unlock" />
          <Tool icon={icons.matchLayer} label="Match Layer" />
        </div>
      </div>
    </Panel>

    <Panel title="Block" className="w-[142px]">
      <BigTool icon={icons.insert} label="Insert" caret className="ml-[3px] w-9" />
      <div className="ml-[6px] w-[89px]">
        <Tool icon={icons.create} label="Create" />
        <Tool icon={icons.edit} label="Edit" />
        <Tool icon={icons.editAttr} label="Edit Attributes" caret className="w-full" />
      </div>
    </Panel>

    <Panel title="Properties" corner className="w-[252px]">
      <BigTool icon={icons.matchProps} label="Match Properties" className="ml-[3px] w-11" />
      <div className="ml-1">
        <Tool icon={icons.colorWheel} title="Object Color" />
        <Tool icon={icons.lineweight} title="Lineweight" />
        <Tool icon={icons.linetype} title="Linetype" />
      </div>
      <div className="ml-[2px] flex w-[180px] flex-col gap-[2px] pt-px">
        <Combo
          label="Object color"
          value="ByLayer"
          lead={<span className="mr-[10px] ml-3 h-4 w-4 border border-[#4cc] bg-[#00ffff]" />}
          className="text-black"
        />
        <Combo label="Object lineweight" value="ByLayer" lead={<LineSample />} />
        <Combo label="Object linetype" value="BYLAYER" lead={<LineSample />} />
      </div>
    </Panel>

    <Panel title="Groups" className="w-[68px]">
      <BigTool icon={icons.group} label="Group" className="ml-px w-10" />
      <div className="w-6">
        <Tool icon={icons.ungroup} title="Ungroup" className="w-full justify-center" />
        <Tool icon={icons.groupEdit} title="Group Edit" className="w-full justify-center" />
        <Tool icon={icons.groupSelect} title="Group Selection On/Off" className="w-full justify-center border border-[#3a7bd5] bg-[#a9d0f8]" />
      </div>
    </Panel>

    <Panel title="Utilities" className="w-[87px]">
      <BigTool icon={icons.measure} label="Measure" caret className="ml-2 w-11" />
      <div className="ml-3">
        <Tool icon={icons.quickSelect} title="Quick Select" />
        <Tool icon={icons.pointId} title="ID Point" />
        <Tool icon={icons.calc} title="Quick Calculator" />
      </div>
    </Panel>

    <Panel title="Clipboard" caret={false} className="w-[74px]">
      <BigTool icon={icons.paste} label="Paste" caret className="ml-1 w-10" />
      <div className="ml-[7px]">
        <Tool icon={icons.cut} title="Cut" />
        <Tool icon={icons.copyClip} title="Copy Clip" />
      </div>
    </Panel>
  </div>
);

const FileTabs = () => (
  <div className="flex h-[26px] items-end bg-[#b1b1b1] pl-[15px]">
    <button
      type="button"
      className="h-[22px] w-[132px] bg-linear-to-b from-[#dedede] to-[#cfcfcf] pl-[17px] text-left text-[#7a7a7a] [clip-path:polygon(0_100%,3px_94%,9px_10%,13px_0,126px_0,129px_10%,100%_100%)]"
    >
      Start
    </button>
    <div className="-ml-1 flex h-[22px] w-[132px] items-center bg-[#f6f6f6] pr-[20px] pl-3 text-[#111] [clip-path:polygon(0_100%,3px_94%,9px_10%,13px_0,118px_0,122px_10%,129px_94%,100%_100%)]">
      <button type="button" className="flex-1 text-left">5808 masterGA*</button>
      <button type="button" aria-label="Close drawing">
        <svg width="7" height="7" viewBox="0 0 7 7" stroke="#999" strokeWidth="1.300" aria-hidden="true">
          <path d="M.5.5l6 6M6.500.5l-6 6" />
        </svg>
      </button>
    </div>
    <button
      type="button"
      aria-label="New drawing"
      className="mb-[2px] -ml-px flex h-[15px] w-6 items-center justify-center rounded-tl-sm rounded-br-sm bg-[#e6e6e6] [clip-path:polygon(0_0,80%_0,100%_100%,20%_100%)]"
    >
      <svg width="9" height="9" viewBox="0 0 9 9" stroke="#444" strokeWidth="2" aria-hidden="true"><path d="M4.500 0v9M0 4.500h9" /></svg>
    </button>
  </div>
);

const PaletteStrip: React.FC<{ names: string[]; side: 'left' | 'right' }> = ({ names, side }) => (
  <aside className={clsx('flex w-[25px] shrink-0 flex-col gap-[6px] bg-[#f0f0f3] pt-[5px] pb-[5px]', side === 'left' ? 'pr-[3px] pl-px' : 'pr-px pl-[3px]')}>
    {names.map((name) => (
      <button
        key={name}
        type="button"
        className="relative flex flex-1 items-center justify-center rounded-[2px] border border-[#6d6f78] bg-linear-to-r from-[#f2f3f6] via-[#d6d8dd] to-[#adb2b9] text-[10px] text-[#222]"
      >
        <span className="absolute top-[2px] h-[3px] w-[9px] bg-[radial-gradient(#999_35%,transparent_40%)] bg-size-[2px_2px]" />
        <span className="rotate-180 whitespace-nowrap [writing-mode:vertical-rl]">{name}</span>
      </button>
    ))}
  </aside>
);

const CommandLine = () => (
  <form className="absolute bottom-0 left-[810px] flex h-[27px] w-[249px]" onSubmit={(e) => e.preventDefault()}>
    <div className="flex w-[54px] items-center bg-linear-to-b from-[#7c7e80] to-[#55585b] pl-1">
      <span className="h-[18px] w-[6px] bg-[radial-gradient(#b5b5b5_35%,transparent_40%)] bg-size-[2px_2px]" />
      <button type="button" aria-label="Close command line" className="ml-[6px]">
        <svg width="9" height="9" viewBox="0 0 9 9" stroke="#dcdcdc" strokeWidth="2" aria-hidden="true"><path d="M.5.5l8 8M8.500.5l-8 8" /></svg>
      </button>
      <button type="button" aria-label="Customize" className="ml-[10px]">
        <svg width="14" height="14" viewBox="0 0 14 14" fill="none" stroke="#dedede" aria-hidden="true">
          <path d="M6 6l6.500 6.500" strokeWidth="2.800" strokeLinecap="round" />
          <path d="M4.500 1.200A3 3 0 1 0 7 5.500" strokeWidth="2" />
          <path d="M4 1l.5 3L7.500 4.500" strokeWidth="1.200" />
        </svg>
      </button>
    </div>
    <div className="flex flex-1 items-center bg-[#c0c2c3] pr-1 pl-[6px]">
      <svg width="14" height="14" viewBox="0 0 14 14" fill="none" aria-hidden="true">
        <rect x=".5" y=".5" width="13" height="13" fill="#c9cedb" stroke="#868b9b" />
        <path d="M3 4l3 3-3 3M7 10.500h4" stroke="#333b55" strokeWidth="1.200" />
      </svg>
      <Caret className="ml-1 text-[#666]" />
      <input
        type="text"
        aria-label="Command"
        placeholder="Type a command"
        className="ml-2 min-w-0 flex-1 bg-transparent font-['Liberation_Mono',monospace] text-[12px] italic outline-none placeholder:text-[#787878]"
      />
      <Caret wide className="rotate-180 text-[#111]" />
    </div>
  </form>
);

const Canvas = () => (
  <main className="relative min-w-0 flex-1 overflow-hidden bg-[#212830] text-white">
    {/* crosshair cursor */}
    <div className="absolute inset-y-0 left-[1100px] w-px bg-white" />
    <div className="absolute inset-x-0 top-[483px] h-px bg-white" />
    <div className="absolute top-[480px] left-[1098px] h-[7px] w-[5px] border border-white bg-[#212830]" />

    <div className="absolute top-[10px] right-3 flex items-center gap-[10px]">
      <button type="button" aria-label="Minimize drawing" className="h-[10px] w-[10px] pt-[7px]">
        <span className="block h-[3px] w-full bg-[#e4e8f2]" />
      </button>
      <button type="button" aria-label="Restore drawing">
        <svg width="10" height="10" viewBox="0 0 10 10" fill="none" stroke="#e4e8f2" aria-hidden="true">
          <path d="M3 .5h6.500v6.500" />
          <path d="M1 3.500h5.500V9H1z" strokeWidth="2" />
        </svg>
      </button>
      <button type="button" aria-label="Close drawing">
        <svg width="9" height="9" viewBox="0 0 9 9" stroke="#f2f2f2" strokeWidth="2" aria-hidden="true"><path d="M.5.5l8 8M8.500.5l-8 8" /></svg>
      </button>
    </div>

    <div
      role="tooltip"
      className="absolute top-[269px] left-[937px] border border-[#777] bg-white px-[5px] font-['Noto_Sans',sans-serif] text-[11px] leading-[18px] whitespace-nowrap text-[#575757] shadow-[2px_2px_2px_rgba(0,0,0,0.5)]"
    >
      {'\\\\DFALSERVER\\Shared Folders\\Data\\Job Files\\5800 - 5899\\5808 - W. Wing Yip, Croydon\\Traffic\\sprinter in-out carpark TOR.DXF'}
    </div>

    {/* UCS icon */}
    <svg width="80" height="90" viewBox="0 -10 80 90" className="absolute bottom-[7px] left-4" fill="none" stroke="#fff" aria-hidden="true">
      <path d="M5.500 14v51.500H56M1.500 60.500h9v9h-9z" />
      <g fill="#fff" stroke="none" fontFamily="Lato, sans-serif" fontSize="19" fontWeight="300">
        <text x="13.500" y="9" textAnchor="middle">Y</text>
        <text x="66.500" y="64" textAnchor="middle">X</text>
      </g>
    </svg>

    <CommandLine />
  </main>
);

/* ---------- status bar ---------- */

const statusSvg = (children: React.ReactNode) => (
  <svg width="16" height="16" viewBox="0 0 16 16" fill="none" stroke="#6a6a6a" strokeWidth="1.500" className="shrink-0" aria-hidden="true">
    {children}
  </svg>
);

const DropCaret = () => <Caret wide className="text-[#111]" />;

const person = 'M7 1h2l.5 4c.5 4 2.500 7 6.500 9l-.5 1.500H11L8 11l-3 4.500H.5L0 14c4-2 6-5 6.500-9z';

const STATUS_ITEMS: { name: string; cls: string; node: React.ReactNode }[] = [
  { name: 'Model space', cls: 'w-[50px] text-[12px] text-black', node: 'MODEL' },
  { name: 'Grid', cls: 'w-[26px]', node: statusSvg(<path d="M3.500 1v14M6.500 1v14M9.500 1v14M12.500 1v14M1 3.500h14M1 6.500h14M1 9.500h14M1 12.500h14" strokeWidth="1" />) },
  { name: 'Snap', cls: 'w-[22px]', node: statusSvg(<path d="M1 2.500h14M1 5.500h14M1 8.500h14M1 11.500h14M1 14.500h14" strokeDasharray="1 2" strokeWidth="1" stroke="#444" />) },
  { name: 'Snap options', cls: 'w-4', node: <DropCaret /> },
  { name: 'Ortho', cls: 'ml-2 w-5', node: statusSvg(<path d="M2.500 2v11.500H15M2.500 9.500h4v4" />) },
  { name: 'Polar', cls: 'w-6', node: statusSvg(<><circle cx="7.500" cy="8" r="6.500" /><path d="M7.500 8.500h8.500M7.500 8.500L13 3" /></>) },
  { name: 'Polar options', cls: 'w-3', node: <DropCaret /> },
  { name: 'Isodraft', cls: 'w-7', node: statusSvg(<path d="M8.500 0v16M0 1l16 14" />) },
  { name: 'Isodraft options', cls: 'w-3', node: <DropCaret /> },
  { name: 'Object tracking', cls: 'w-[26px]', node: statusSvg(<><path d="M15 1L1 14.500h15" stroke="#3b97ef" /><rect x="6" y="7" width="3.500" height="3.500" fill="#3b97ef" stroke="none" /></>) },
  { name: 'Object snap', cls: 'w-[26px]', node: statusSvg(<><path d="M2.500 2.500h12v12h-12z" stroke="#3b97ef" /><path d="M.5.5h4v4h-4z" fill="#2cc52c" stroke="#111" strokeWidth="1" /></>) },
  { name: 'Object snap options', cls: 'w-3', node: <DropCaret /> },
  { name: 'Annotation visibility', cls: 'w-[30px]', node: statusSvg(<><path d={person} fill="#3b97ef" stroke="none" /><circle cx="12" cy="4" r="2.500" stroke="#3b97ef" strokeWidth="1.200" fill="#e6e6e6" /></>) },
  { name: 'Auto scale', cls: 'w-[22px]', node: statusSvg(<><path d={person} fill="#5c5c5c" stroke="none" /><path d="M13.500 1l-3 3.500h4L12 8" strokeWidth="1" /></>) },
  { name: 'Annotation', cls: 'w-6', node: statusSvg(<path d={person} fill="#5c5c5c" stroke="none" />) },
  { name: 'Annotation scale', cls: 'w-12 gap-1 text-[11px] text-black', node: <>1:100<DropCaret /></> },
  {
    name: 'Workspace',
    cls: 'w-7',
    node: statusSvg(<><circle cx="8" cy="8" r="3.700" strokeWidth="3" stroke="#666" /><circle cx="8" cy="8" r="6" strokeWidth="2" strokeDasharray="2.400 2.300" stroke="#666" /></>),
  },
  { name: 'Workspace options', cls: 'w-3', node: <DropCaret /> },
  { name: 'Annotation monitor', cls: 'w-7', node: statusSvg(<path d="M8 1v14M1 8h14" strokeWidth="2" />) },
  { name: 'Isolate objects', cls: 'w-[26px]', node: statusSvg(<><path d="M.5 1.500h6v6h-6zM7 9.500l3.500 5.500h-7z" strokeWidth="1.200" /><circle cx="12.500" cy="5" r="3" strokeWidth="1.200" /></>) },
  { name: 'Graphics performance', cls: 'w-7', node: statusSvg(<><circle cx="8" cy="8" r="7.700" fill="#0f68ad" stroke="#8fc3ea" strokeWidth=".6" /><path d="M9 8.500l1.500 1.500L13 7" stroke="#3fa0e0" strokeWidth="1" /></>) },
  { name: 'System variable monitor', cls: 'w-[30px]', node: <svg width="20" height="17" viewBox="0 0 20 17" fill="none" stroke="#555" aria-hidden="true"><path d="M.5.500h18v14H.5z" fill="#f4f4f4" /><path d="M1 14c2-8 4-11 8-13" /><path d="M15.500 8l4 8h-8z" fill="#e8662a" stroke="#c14a12" /><path d="M15.500 11v2.500" stroke="#fff" /></svg> },
  { name: 'Plot', cls: 'w-[18px]', node: statusSvg(<><path d="M3.500 5V2.500h9V5" strokeWidth="1" /><path d="M1.500 5.500h13v5h-13z" fill="#f4f4f4" stroke="#333" /><path d="M3.500 9.500h9v4h-9z" fill="#f0b9a0" stroke="#a0452a" strokeWidth="1" /></>) },
  { name: 'Plot details', cls: 'w-5', node: statusSvg(<><path d="M1 3h11v6H1z" fill="#6f86b8" stroke="#445" strokeWidth="1" /><path d="M1 9h10v5H1z" fill="#f2d43a" stroke="#777" strokeWidth="1" /><path d="M7 11l3 3.500L15.500 7" stroke="#3aa52e" strokeWidth="2.300" /></>) },
  { name: 'Clean screen', cls: 'w-8', node: statusSvg(<><path d="M.5 2.500h15v11H.5z" strokeWidth="1.300" /><path d="M9 7.500l4-3M10 4.500h3v3M7 8.500l-4 3M6 11.500H3v-3" strokeWidth="1.200" /></>) },
  { name: 'Customization', cls: 'w-[18px]', node: statusSvg(<path d="M0 3h16M0 8h16M0 13h16" strokeWidth="2" />) },
];

const StatusBar = () => (
  <footer className="flex h-[29px] items-start justify-between bg-[#b1b1b1]">
    <div className="flex items-start pl-[9px]">
      <button type="button" className="h-[17px] w-14 bg-white pb-[2px] font-bold text-black [clip-path:polygon(0_0,100%_0,94%_40%,89%_100%,12%_100%,6%_40%)]">
        Model
      </button>
      <button type="button" className="-ml-px h-[17px] w-[34px] bg-[#d9d9d9] pb-[2px] text-[#777] [clip-path:polygon(0_0,100%_0,90%_40%,82%_100%,16%_100%,8%_60%)]">
        A1
      </button>
      <button type="button" aria-label="New layout" className="mt-px ml-[2px] flex h-[15px] w-6 items-center justify-center bg-[#e0e0e0] [clip-path:polygon(20%_0,100%_0,82%_100%,0_100%)]">
        <svg width="8" height="8" viewBox="0 0 8 8" stroke="#444" strokeWidth="2" aria-hidden="true"><path d="M4 0v8M0 4h8" /></svg>
      </button>
    </div>
    <div className="flex h-7 items-center bg-[#e7e7e7] pr-1">
      {STATUS_ITEMS.map((item) => (
        <button key={item.name} type="button" aria-label={item.name} className={clsx('flex h-full items-center justify-center', item.cls)}>
          {item.node}
        </button>
      ))}
    </div>
  </footer>
);

interface BalloonProps {
  title: string;
  text: string;
  link: string;
  closable?: boolean;
  className?: string;
  tailClass: string;
}

const Balloon: React.FC<BalloonProps> = ({ title, text, link, closable, className, tailClass }) => (
  <div role="status" className={clsx('absolute bottom-[34px] h-[75px] w-[215px] rounded-[14px] border border-black bg-[#ffffe1] text-black', className)}>
    <div className="flex h-8 items-center gap-[10px] pl-2">
      <svg width="16" height="16" viewBox="0 0 16 16" aria-hidden="true">
        <circle cx="8" cy="8" r="7.500" fill="#2a4fb8" stroke="#8090b8" />
        <ellipse cx="8" cy="4.500" rx="5.500" ry="3.500" fill="#6f92e0" opacity=".6" />
        <path d="M8 3v2.200M8 6.800V12.500" stroke="#fff" strokeWidth="2.200" />
      </svg>
      <strong className="font-semibold whitespace-nowrap">{title}</strong>
      {closable && (
        <button type="button" aria-label="Close message" className="mr-2 ml-auto flex h-4 w-4 items-center justify-center border border-[#888] bg-[#f1eff8]">
          <svg width="8" height="8" viewBox="0 0 8 8" stroke="#000" strokeWidth="2" aria-hidden="true"><path d="M.5.5l7 7M7.500.5l-7 7" /></svg>
        </button>
      )}
    </div>
    <p className="h-[18px] pl-[14px] leading-3 whitespace-nowrap">{text}</p>
    <a href="#details" className="block pl-[14px] leading-3 text-[#1010c8] underline">{link}</a>
    <svg width="20" height="22" viewBox="0 0 20 22" className={clsx('absolute top-[72px]', tailClass)} aria-hidden="true">
      <path d="M0 0h18v20.500L1 1z" fill="#ffffe1" />
      <path d="M.500 1l17.500 19.500V1" fill="none" stroke="#000" />
    </svg>
  </div>
);

export default function App() {
  return (
    <div className="relative flex h-screen flex-col overflow-hidden font-['Open_Sans','Noto_Sans',sans-serif] text-[9px] leading-3 text-[#222]">
      <Header />
      <Ribbon />
      <FileTabs />
      <div className="flex min-h-0 flex-1 border-t-4 border-[#ececf0]">
        <PaletteStrip side="left" names={['Layer Properties Manager', 'Properties']} />
        <Canvas />
        <PaletteStrip side="right" names={['Design Feed', 'External References', 'DesignCenter']} />
      </div>
      <StatusBar />

      <Balloon
        title="System Variable Changed"
        text="One of the monitored system var"
        link="Click To View Change"
        className="right-[158px]"
        tailClass="left-[250px]"
      />
      <Balloon
        title="Plot and Publish Job Complete"
        text="No errors or warnings found"
        link="Click to view plot and publish details..."
        closable
        className="right-[14px]"
        tailClass="left-[147px]"
      />
    </div>
  );
}
